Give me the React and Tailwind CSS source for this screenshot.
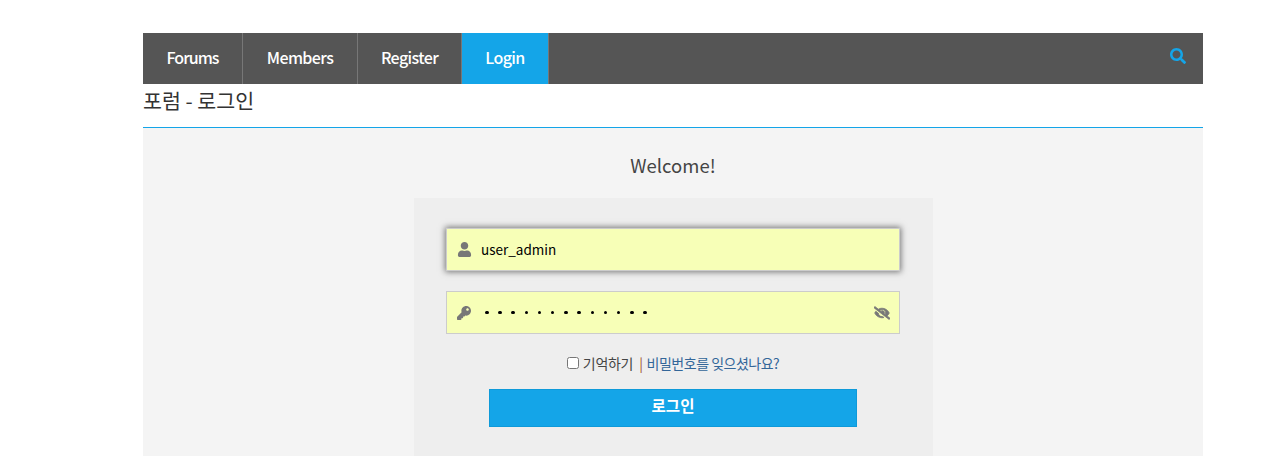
import React from 'react';
import { FaUser, FaKey, FaEyeSlash, FaSearch } from 'react-icons/fa';

const font = "font-['Noto_Sans_CJK_KR','Noto_Sans',sans-serif]";

const navItems = [
  { label: 'Forums', width: 'w-[100px]', tracking: 'tracking-[-1px]' },
  { label: 'Members', width: 'w-[115px]', tracking: 'tracking-[-0.6px]' },
  { label: 'Register', width: 'w-[104px]', tracking: 'tracking-[-0.6px]' },
];

const App = () => {
  return (
    <div className={`h-screen overflow-hidden bg-white pt-[33px] ${font}`}>
      <div className="ml-[143px] w-[1060px]">
        <nav className="flex h-[51px] items-stretch bg-[#555555]">
          {navItems.map((item) => (
            <a
              key={item.label}
              className={`flex ${item.width} ${item.tracking} items-center justify-center border-r border-[#777777] pb-[3px] text-[16px] font-medium text-white`}
            >
              {item.label}
            </a>
          ))}
          <a className="flex w-[87px] items-center justify-center border-r border-[#777777] bg-[#14a5e8] pb-[3px] text-[16px] font-medium tracking-[-0.6px] text-white">
            Login
          </a>
          <div className="ml-auto flex items-start pr-[17px] pt-[15px]">
            <FaSearch className="h-4 w-4 text-[#14a5e8]" />
          </div>
        </nav>

        <h1 className="h-[44px] border-b border-[#14a5e8] text-[20.6px] leading-[33px] text-[#333333]">
          포럼 - 로그인
        </h1>

        <div className="flex h-[400px] flex-col items-center bg-[#f4f4f4] pt-[23px]">
          <p className="h-[47px] text-[18.5px] leading-[28px] text-[#444444]">Welcome!</p>

          <form className="flex h-[300px] w-[519px] flex-col items-center bg-[#eeeeee] pt-[30px]">
            <div className="flex h-[43px] w-[454px] items-center border border-[#cccccc] bg-[#f7ffb7] pl-[10px] shadow-[0_0_6px_1px_rgba(0,0,0,0.5)]">
              <FaUser className="h-[15px] w-[15px] text-[#777777]" />
              <span className="ml-[9px] text-[13.5px] text-black">user_admin</span>
            </div>

            <div className="mt-[20px] flex h-[43px] w-[454px] items-center border border-[#cccccc] bg-[#f7ffb7] pl-[10px] pr-[9px]">
              <FaKey className="h-[14px] w-[14px] text-[#777777]" />
              <span className="ml-[14px] flex gap-[9.7px]">
                {Array.from({ length: 13 }).map((_, i) => (
                  <span key={i} className="h-[3.5px] w-[3.5px] rounded-full bg-black" />
                ))}
              </span>
              <FaEyeSlash stroke="currentColor" strokeWidth={30} className="ml-auto h-[16px] w-[16px] text-[#777777]" />
            </div>

            <div className="mt-[19px] flex h-[20px] items-center text-[14px] tracking-[-0.3px] text-[#444444]">
              <input type="checkbox" className="mr-[4px] h-[12px] w-[12px]" />
              <span>기억하기</span>
              <span className="ml-[6px] mr-[4px] text-[#a0522d]">|</span>
              <a className="tracking-[-0.5px] text-[#336699]">비밀번호를 잊으셨나요?</a>
            </div>

            <button
              type="button"
              className="mt-[16px] h-[38px] w-[368px] border border-[#0e9ad9] bg-[#14a5e8] pb-[4px] text-[15.5px] font-bold text-white"
            >
              로그인
            </button>
          </form>
        </div>
      </div>
    </div>
  );
};

export default App;
